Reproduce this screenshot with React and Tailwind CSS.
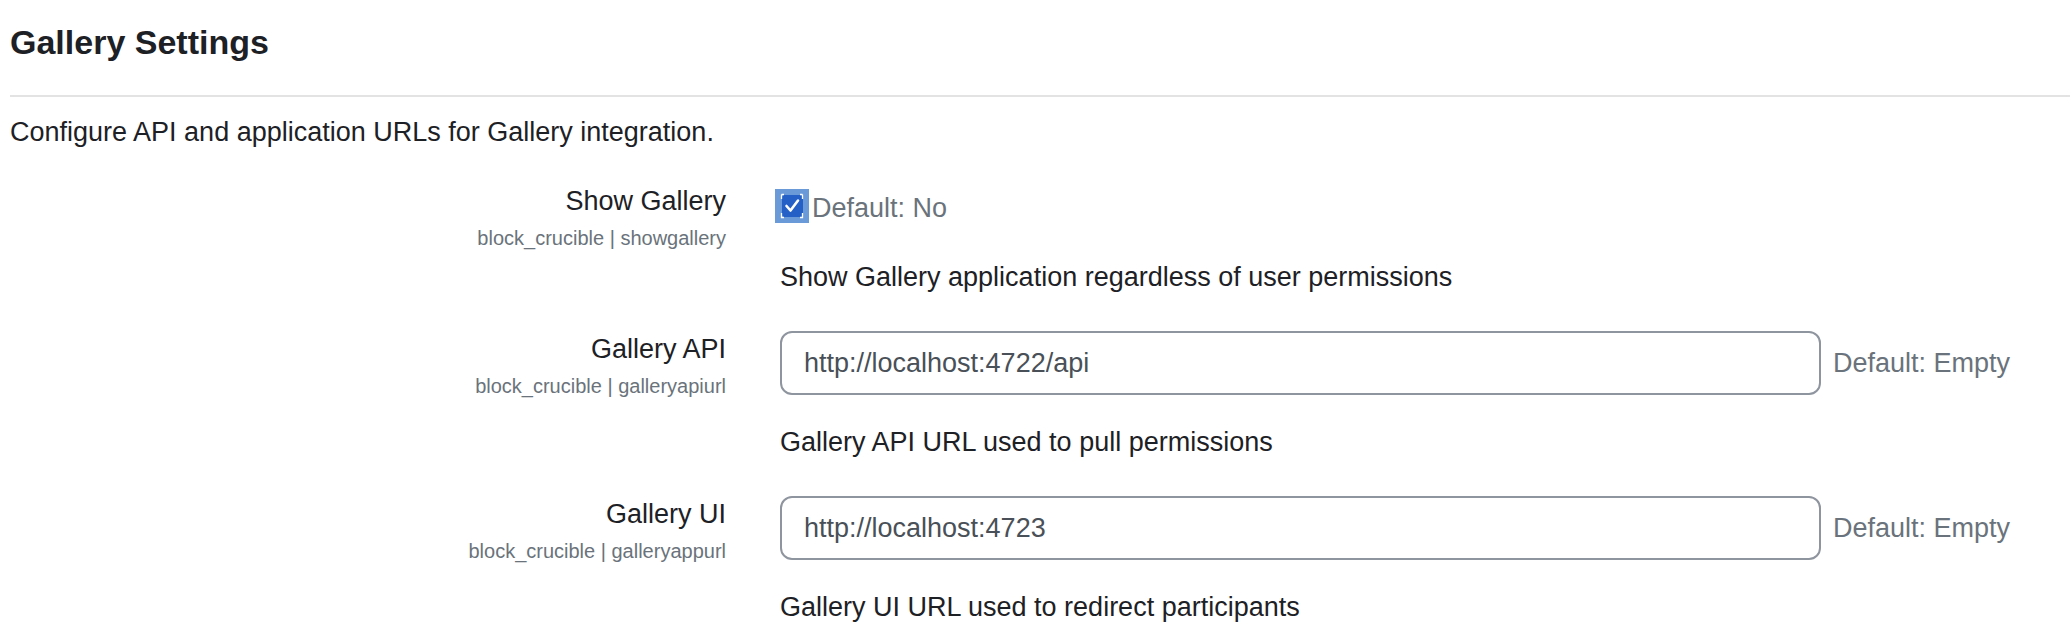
import React from 'react'

const rows = [
  {
    id: 'showgallery',
    label: 'Show Gallery',
    name: 'block_crucible | showgallery',
    type: 'checkbox',
    def: 'Default: No',
    help: 'Show Gallery application regardless of user permissions',
  },
  {
    id: 'galleryapiurl',
    label: 'Gallery API',
    name: 'block_crucible | galleryapiurl',
    type: 'text',
    value: 'http://localhost:4722/api',
    def: 'Default: Empty',
    help: 'Gallery API URL used to pull permissions',
  },
  {
    id: 'galleryappurl',
    label: 'Gallery UI',
    name: 'block_crucible | galleryappurl',
    type: 'text',
    value: 'http://localhost:4723',
    def: 'Default: Empty',
    help: 'Gallery UI URL used to redirect participants',
  },
]

function FocusedCheckbox() {
  return (
    <svg width="34" height="34" viewBox="0 0 34 34" className="shrink-0">
      <rect x="0" y="0" width="34" height="34" fill="#6b9ad8" />
      <rect x="7" y="6" width="21" height="22" rx="2" fill="#2460c6" />
      {/* focus ring corners */}
      <path d="M6.5 5.5 H9 M6.5 5.5 V10 M6.5 24 V28.5 H9 M27.5 5.5 H25 M27.5 5.5 V10 M27.5 24 V28.5 H25" stroke="#ffffff" strokeWidth="1.3" fill="none" />
      <path d="M11.5 17 L15.5 21.5 L23 11.5" stroke="#ffffff" strokeWidth="2.6" fill="none" strokeLinecap="round" strokeLinejoin="round" />
    </svg>
  )
}

function SettingRow({ row }) {
  return (
    <div className="flex">
      {/* Label */}
      <div className="w-[716px] shrink-0 text-right">
        <div className="text-[27px] leading-[39px] text-[#1d2125]">{row.label}</div>
        <div className="text-[20px] leading-[31px] text-[#6a737b] mt-[2px]">{row.name}</div>
      </div>

      {/* Control */}
      <div className="ml-[54px] flex-1">
        {row.type === 'checkbox' ? (
          <div className="h-[47px] flex items-center -ml-[5px]">
            <FocusedCheckbox />
            <span className="ml-[3px] mt-[5px] text-[27px] leading-[39px] text-[#6a737b]">{row.def}</span>
          </div>
        ) : (
          <div className="flex items-center mt-[1px]">
            <div className="w-[1041px] h-[64px] border-2 border-[#8f959e] rounded-[12px] bg-white flex items-center px-[22px] text-[27px] text-[#495057]">
              {row.value}
            </div>
            <span className="ml-[12px] text-[27px] leading-[39px] text-[#6a737b]">{row.def}</span>
          </div>
        )}
        <div className={`${row.type === 'checkbox' ? 'mt-[29px]' : 'mt-[28px]'} text-[27px] leading-[39px] text-[#1d2125]`}>
          {row.help}
        </div>
      </div>
    </div>
  )
}

export default function App() {
  return (
    <div className="min-h-screen bg-white pl-[10px] font-['Liberation_Sans',Arial,sans-serif]">
      {/* Header */}
      <h2 className="pt-[22px] text-[34px] leading-[40px] font-bold text-[#1d2125]">Gallery Settings</h2>
      <div className="mt-[33px] h-[2px] bg-[#e3e3e3]"></div>
      <p className="mt-[16px] text-[27px] leading-[39px] text-[#1d2125]">
        Configure API and application URLs for Gallery integration.
      </p>

      {/* Settings */}
      <div className="mt-[30px] flex flex-col gap-[33px]">
        {rows.map((row) => (
          <SettingRow key={row.id} row={row} />
        ))}
      </div>
    </div>
  )
}
